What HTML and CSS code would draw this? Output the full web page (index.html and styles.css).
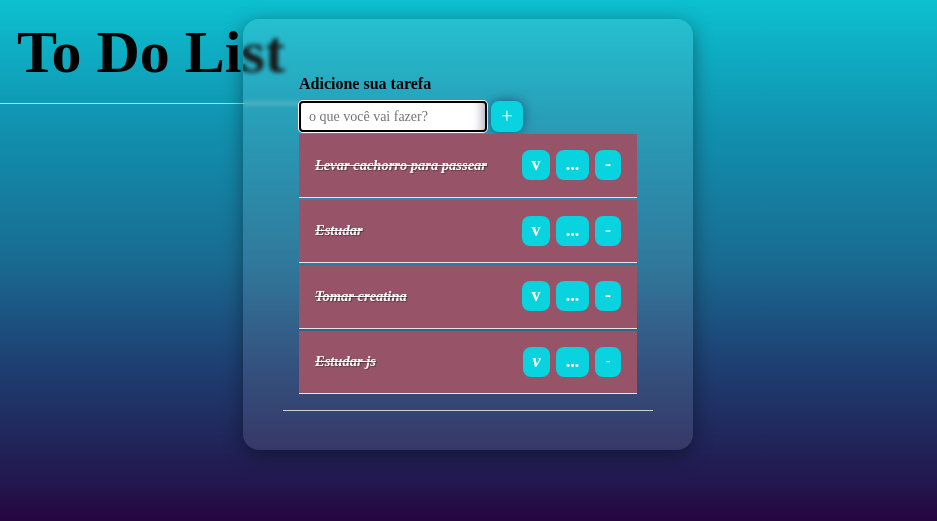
FILE: index.html
```html
<!DOCTYPE html>
<html lang="pt-BR">
<head>
<meta charset="utf-8">
<title>To Do List</title>
<link rel="stylesheet" href="styles.css">
</head>
<body>
<div class="page">
  <header class="top">
    <h1 class="title">To Do List</h1>
    <hr class="top-rule">
  </header>
  <main class="card">
    <label class="label" for="task">Adicione sua tarefa</label>
    <div class="form-row">
      <input id="task" class="task-input" type="text" placeholder="o que você vai fazer?">
      <button class="add-btn">+</button>
    </div>
    <ul class="list">
      <li class="item">
        <span class="item-text">Levar cachorro para passear</span>
        <div class="actions"><button class="btn btn-check">v</button><button class="btn btn-edit">...</button><button class="btn btn-del">-</button></div>
      </li>
      <li class="item">
        <span class="item-text">Estudar</span>
        <div class="actions"><button class="btn btn-check">v</button><button class="btn btn-edit">...</button><button class="btn btn-del">-</button></div>
      </li>
      <li class="item">
        <span class="item-text">Tomar creatina</span>
        <div class="actions"><button class="btn btn-check">v</button><button class="btn btn-edit">...</button><button class="btn btn-del">-</button></div>
      </li>
      <li class="item">
        <span class="item-text">Estudar js</span>
        <div class="actions"><button class="btn btn-check btn-italic">v</button><button class="btn btn-edit">...</button><button class="btn btn-del btn-thin">-</button></div>
      </li>
    </ul>
    <hr class="bottom-rule">
  </main>
</div>
</body>
</html>
```
FILE: styles.css
```css
html, body {
  margin: 0;
  padding: 0;
}
body {
  min-height: 100vh;
  background: linear-gradient(180deg, #0cc0d0 0%, #1190ae 25%, #196b92 50%, #1e3f72 70%, #202a5e 82%, #22184f 92%, #27053f 100%);
  font-family: "Liberation Serif", "Times New Roman", serif;
  overflow: hidden;
}
.page {
  display: grid;
  min-height: 100vh;
}
.top, .card {
  grid-area: 1 / 1;
}
.top {
  align-self: start;
}
.title {
  margin: 18px 0 0 17px;
  font-size: 60px;
  font-weight: bold;
  line-height: 69px;
  color: #000;
}
.top-rule {
  width: 300px;
  margin: 16px 0 0 0;
  border: 0;
  border-top: 1px solid #cfcfcf;
  height: 0;
}
.card {
  justify-self: center;
  align-self: start;
  box-sizing: border-box;
  width: 450px;
  height: 431px;
  margin: 19px 0 0 -1px;
  padding: 56px 56px 0;
  border-radius: 16px;
  background: rgba(255, 255, 255, 0.1);
  backdrop-filter: blur(2px);
  -webkit-backdrop-filter: blur(2px);
  box-shadow: 0 5px 20px rgba(0, 0, 0, 0.4);
  display: flex;
  flex-direction: column;
}
.label {
  display: block;
  font-size: 16px;
  font-weight: bold;
  color: #000;
  line-height: normal;
}
.form-row {
  display: flex;
  gap: 4px;
  margin-top: 8px;
}
.task-input {
  box-sizing: border-box;
  width: 188px;
  height: 31px;
  border: 2px solid #000;
  border-radius: 4px;
  padding: 0 8px;
  font-family: "Liberation Serif", serif;
  font-size: 14px;
  background: #fff;
  box-shadow: 0 0 0 1px #fff, inset -12px 0 10px -8px rgba(90, 70, 110, 0.35);
  outline: none;
}
.task-input::placeholder {
  color: #757575;
}
.add-btn {
  box-sizing: border-box;
  width: 32px;
  height: 31px;
  border: 0;
  border-radius: 8px;
  background: #08d3df;
  color: #fff;
  font-family: "Liberation Serif", serif;
  font-size: 20px;
  line-height: 1;
  padding: 0 0 2px;
  box-shadow: 0 0 12px rgba(30, 20, 70, 0.55);
}
.list {
  list-style: none;
  margin: 2px 0 0;
  padding: 0;
}
.item {
  box-sizing: border-box;
  height: 63.5px;
  margin-bottom: 2px;
  padding: 0 16px;
  background: #975468;
  border-bottom: 1px solid #e6e6e6;
  display: flex;
  align-items: center;
  justify-content: space-between;
}
.item-text {
  color: #fff;
  font-size: 14.5px;
  font-weight: bold;
  font-style: italic;
  text-decoration: line-through;
  text-shadow: 1px 1px 1px rgba(0, 0, 0, 0.35);
}
.actions {
  display: flex;
  gap: 6px;
}
.btn {
  box-sizing: border-box;
  height: 30px;
  padding: 0 0 2px;
  border: 0;
  border-radius: 8px;
  background: #08d3df;
  color: #fff;
  font-family: "Liberation Serif", serif;
  font-size: 18px;
  font-weight: bold;
  line-height: 1;
}
.btn-check {
  width: 28px;
}
.btn-edit {
  width: 33px;
}
.btn-del {
  width: 26px;
}
.btn-italic {
  font-style: italic;
  width: 27px;
}
.btn-thin {
  font-weight: normal;
  font-size: 14px;
}
.bottom-rule {
  width: 370px;
  margin: 14px -16px 0;
  border: 0;
  border-top: 1px solid #cfcfcf;
  height: 0;
}
```
